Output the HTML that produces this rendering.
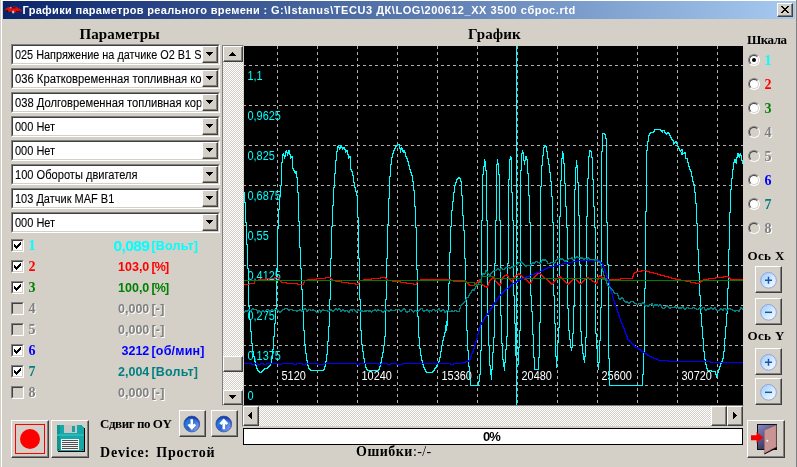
<!DOCTYPE html>
<html lang="ru">
<head>
<meta charset="utf-8">
<title>Графики параметров реального времени</title>
<style>
html,body{margin:0;padding:0;}
body{width:797px;height:467px;overflow:hidden;background:#d4d0c8;position:relative;font-family:"Liberation Sans",sans-serif;font-size:11px;color:#000;}
.abs{position:absolute;}
#frame{left:0;top:0;width:797px;height:467px;box-sizing:border-box;border-left:1px solid #d4d0c8;border-top:1px solid #d4d0c8;}
#title{left:3px;top:1px;width:792px;height:18px;background:linear-gradient(to right,#0a246a 0%,#a6caf0 100%);}
#title .txt{left:19.5px;top:2px;color:#fff;font-weight:bold;font-size:11px;line-height:14px;white-space:nowrap;letter-spacing:0.45px;}
#close{left:777px;top:3px;width:16px;height:14px;box-sizing:border-box;background:#d4d0c8;border:1px solid;border-color:#fff #404040 #404040 #fff;box-shadow:inset -1px -1px 0 #808080;}
.hdr{font-family:"Liberation Serif",serif;font-weight:bold;white-space:nowrap;}
.combo{left:11px;width:209px;height:21px;box-sizing:border-box;background:#fff;border:1px solid;border-color:#808080 #fff #fff #808080;}
.combo:before{content:"";position:absolute;left:0;top:0;right:0;bottom:0;border:1px solid;border-color:#404040 #d4d0c8 #d4d0c8 #404040;}
.combo .t{position:absolute;left:3.4px;top:3px;-webkit-text-stroke:0.1px #000;width:203px;overflow:hidden;white-space:nowrap;font-size:12px;line-height:14px;transform:scaleX(0.917);transform-origin:0 0;}
.btn{box-sizing:border-box;background:#d4d0c8;border:1px solid;border-color:#fff #404040 #404040 #fff;box-shadow:inset -1px -1px 0 #808080,inset 1px 1px 0 #d4d0c8;}
.sbtn{box-sizing:border-box;background:#d4d0c8;border:1px solid;border-color:#d4d0c8 #404040 #404040 #d4d0c8;box-shadow:inset -1px -1px 0 #808080,inset 1px 1px 0 #fff;}
.combo .dd{position:absolute;right:1px;top:1px;width:16px;height:17px;}
.arr{position:absolute;width:0;height:0;border:4px solid transparent;}
.dither{background-color:#eae8e3;background-image:conic-gradient(#fff 25%,#d4d0c8 0 50%,#fff 0 75%,#d4d0c8 0);background-size:2px 2px;}
.cb{left:11px;width:13px;height:13px;box-sizing:border-box;background:#fff;border:1px solid;border-color:#808080 #fff #fff #808080;}
.cb:before{content:"";position:absolute;left:0;top:0;right:0;bottom:0;border:1px solid;border-color:#404040 #d4d0c8 #d4d0c8 #404040;}
.cb.dis{background:#d4d0c8;}
.row{font-family:"Liberation Serif",serif;font-weight:bold;font-size:14px;line-height:16px;white-space:nowrap;}
.val{font-family:"Liberation Sans",sans-serif;font-weight:bold;font-size:12.5px;line-height:15px;white-space:nowrap;}
.dis-t{color:#808080;text-shadow:1px 1px 0 #fff;}
.radio{width:12px;height:12px;border-radius:50%;box-sizing:border-box;background:#fff;border:1px solid;border-color:#808080 #fff #fff #808080;}
.radio:before{content:"";position:absolute;left:0;top:0;right:0;bottom:0;border-radius:50%;border:1px solid;border-color:#404040 #d4d0c8 #d4d0c8 #404040;}
.radio.dis{background:#d4d0c8;}
</style>
</head>
<body>
<div id="root" class="abs" style="left:0;top:0;width:797px;height:467px;will-change:transform">
<div id="frame" class="abs"></div>
<div class="abs" style="left:1px;top:0;width:1px;height:467px;background:#fff"></div><div class="abs" style="left:1px;top:0;width:795px;height:1px;background:#fff"></div><div class="abs" style="left:796px;top:0;width:1px;height:467px;background:#808080"></div>
<div id="title" class="abs">
  <svg class="abs" style="left:1.5px;top:4.6px" width="17" height="8" viewBox="0 0 17 8"><path d="M0.3 3.2 C1.5 1.8 3 1.2 4 0.9 L10 0.6 C11.5 1 12.5 1.8 13.5 2.4 C15.5 2.8 16.3 3.4 16.5 4.4 L16.3 5.8 L12 6.6 L3 5.6 L0.6 4.6 Z" fill="#e01010"/><path d="M4.2 1.3 L9.8 1 L11.8 2.3 L5 2.5 Z" fill="#5a0a10"/><path d="M4.6 1.2 L6.4 1.1 L6.6 2.3 L4.9 2.4Z" fill="#e8a0a0"/><ellipse cx="2.2" cy="5" rx="1" ry="1.3" fill="#301010"/><ellipse cx="8.2" cy="6" rx="1.1" ry="1.5" fill="#e0c0c0"/><path d="M11 5.2 L15.8 4.6 L15.6 5.6 L11.2 6.3Z" fill="#400808"/></svg>
  <div class="txt abs"><span style="letter-spacing:0.32px">Графики параметров реального времени : </span><span style="letter-spacing:0.55px">G:\Istanus\TECU3 ДК\LOG\200612_XX 3500 сброс.rtd</span></div>
</div>
<div id="close" class="abs"><svg class="abs" style="left:3px;top:2px" width="8" height="7" viewBox="0 0 8 7" shape-rendering="crispEdges"><path d="M0 0h2v1h1v1h2v-1h1v-1h2v1h-1v1h-1v1h-1v1h1v1h1v1h1v1h-2v-1h-1v-1h-2v1h-1v1h-2v-1h1v-1h1v-1h1v-1h-1v-1h-1v-1h-1z" fill="#000"/></svg></div>

<div class="abs hdr" id="h1" style="left:79.5px;top:24.5px;font-size:15px;line-height:18px;letter-spacing:0.1px">Параметры</div>
<div class="abs hdr" id="h2" style="left:468px;top:24.5px;font-size:15px;line-height:18px;letter-spacing:0.1px">График</div>
<div class="abs hdr" id="h3" style="left:747px;top:32px;font-size:13px;line-height:16px;letter-spacing:-0.5px">Шкала</div>

<div class="abs combo" style="top:44px"><div class="t" style="transform:scaleX(0.907);width:205.1px">025 Напряжение на датчике O2 B1 S</div><div class="dd btn"><svg class="abs" style="left:3px;top:5px" width="7" height="4" viewBox="0 0 7 4" shape-rendering="crispEdges"><path d="M0 0h7v1h-1v1h-1v1h-1v1h-1v-1h-1v-1h-1v-1h-1z" fill="#000"/></svg></div></div>
<div class="abs combo" style="top:68px"><div class="t" style="transform:scaleX(0.9366);width:198.6px">036 Кратковременная топливная кор</div><div class="dd btn"><svg class="abs" style="left:3px;top:5px" width="7" height="4" viewBox="0 0 7 4" shape-rendering="crispEdges"><path d="M0 0h7v1h-1v1h-1v1h-1v1h-1v-1h-1v-1h-1v-1h-1z" fill="#000"/></svg></div></div>
<div class="abs combo" style="top:92px"><div class="t" style="transform:scaleX(0.9325);width:199.5px">038 Долговременная топливная корр</div><div class="dd btn"><svg class="abs" style="left:3px;top:5px" width="7" height="4" viewBox="0 0 7 4" shape-rendering="crispEdges"><path d="M0 0h7v1h-1v1h-1v1h-1v1h-1v-1h-1v-1h-1v-1h-1z" fill="#000"/></svg></div></div>
<div class="abs combo" style="top:116px"><div class="t" style="transform:scaleX(0.917);width:202.8px">000 Нет</div><div class="dd btn"><svg class="abs" style="left:3px;top:5px" width="7" height="4" viewBox="0 0 7 4" shape-rendering="crispEdges"><path d="M0 0h7v1h-1v1h-1v1h-1v1h-1v-1h-1v-1h-1v-1h-1z" fill="#000"/></svg></div></div>
<div class="abs combo" style="top:140px"><div class="t" style="transform:scaleX(0.917);width:202.8px">000 Нет</div><div class="dd btn"><svg class="abs" style="left:3px;top:5px" width="7" height="4" viewBox="0 0 7 4" shape-rendering="crispEdges"><path d="M0 0h7v1h-1v1h-1v1h-1v1h-1v-1h-1v-1h-1v-1h-1z" fill="#000"/></svg></div></div>
<div class="abs combo" style="top:164px"><div class="t" style="transform:scaleX(0.924);width:201.3px">100 Обороты двигателя</div><div class="dd btn"><svg class="abs" style="left:3px;top:5px" width="7" height="4" viewBox="0 0 7 4" shape-rendering="crispEdges"><path d="M0 0h7v1h-1v1h-1v1h-1v1h-1v-1h-1v-1h-1v-1h-1z" fill="#000"/></svg></div></div>
<div class="abs combo" style="top:188px"><div class="t" style="transform:scaleX(0.917);width:202.8px">103 Датчик MAF B1</div><div class="dd btn"><svg class="abs" style="left:3px;top:5px" width="7" height="4" viewBox="0 0 7 4" shape-rendering="crispEdges"><path d="M0 0h7v1h-1v1h-1v1h-1v1h-1v-1h-1v-1h-1v-1h-1z" fill="#000"/></svg></div></div>
<div class="abs combo" style="top:212px"><div class="t" style="transform:scaleX(0.917);width:202.8px">000 Нет</div><div class="dd btn"><svg class="abs" style="left:3px;top:5px" width="7" height="4" viewBox="0 0 7 4" shape-rendering="crispEdges"><path d="M0 0h7v1h-1v1h-1v1h-1v1h-1v-1h-1v-1h-1v-1h-1z" fill="#000"/></svg></div></div>
<div class="abs cb" style="top:239px"><svg class="abs" style="left:2px;top:2px" width="7" height="7" viewBox="0 0 7 7" shape-rendering="crispEdges"><path d="M0 2h1v1h1v1h1v-1h1v-1h1v-1h1v-1h1v3h-1v1h-1v1h-1v1h-1v1h-1v-1h-1v-1h-1z" fill="#000"/></svg></div>
<div class="abs row" style="left:28.5px;top:238px;color:#00ffff;">1</div>
<div class="abs val" style="right:647.7px;top:238px;font-size:15.5px;letter-spacing:-0.6px;color:#00ffff;">0,089</div>
<div class="abs val" style="left:151.5px;top:239px;letter-spacing:0.2px;color:#00ffff;">[Вольт]</div>
<div class="abs cb" style="top:260px"><svg class="abs" style="left:2px;top:2px" width="7" height="7" viewBox="0 0 7 7" shape-rendering="crispEdges"><path d="M0 2h1v1h1v1h1v-1h1v-1h1v-1h1v-1h1v3h-1v1h-1v1h-1v1h-1v1h-1v-1h-1v-1h-1z" fill="#000"/></svg></div>
<div class="abs row" style="left:28.5px;top:259px;color:#ff0000;">2</div>
<div class="abs val" style="right:647.7px;top:260px;letter-spacing:0px;color:#ff0000;">103,0</div>
<div class="abs val" style="left:151.5px;top:260px;letter-spacing:-0.9px;color:#ff0000;">[%]</div>
<div class="abs cb" style="top:281px"><svg class="abs" style="left:2px;top:2px" width="7" height="7" viewBox="0 0 7 7" shape-rendering="crispEdges"><path d="M0 2h1v1h1v1h1v-1h1v-1h1v-1h1v-1h1v3h-1v1h-1v1h-1v1h-1v1h-1v-1h-1v-1h-1z" fill="#000"/></svg></div>
<div class="abs row" style="left:28.5px;top:280px;color:#008000;">3</div>
<div class="abs val" style="right:647.7px;top:281px;letter-spacing:0px;color:#008000;">100,0</div>
<div class="abs val" style="left:151.5px;top:281px;letter-spacing:-0.9px;color:#008000;">[%]</div>
<div class="abs cb dis" style="top:302px"></div>
<div class="abs row dis-t" style="left:28.5px;top:301px;">4</div>
<div class="abs val dis-t" style="right:647.7px;top:302px;letter-spacing:0px;">0,000</div>
<div class="abs val dis-t" style="left:151.5px;top:302px;letter-spacing:0.2px;">[-]</div>
<div class="abs cb dis" style="top:323px"></div>
<div class="abs row dis-t" style="left:28.5px;top:322px;">5</div>
<div class="abs val dis-t" style="right:647.7px;top:323px;letter-spacing:0px;">0,000</div>
<div class="abs val dis-t" style="left:151.5px;top:323px;letter-spacing:0.2px;">[-]</div>
<div class="abs cb" style="top:344px"><svg class="abs" style="left:2px;top:2px" width="7" height="7" viewBox="0 0 7 7" shape-rendering="crispEdges"><path d="M0 2h1v1h1v1h1v-1h1v-1h1v-1h1v-1h1v3h-1v1h-1v1h-1v1h-1v1h-1v-1h-1v-1h-1z" fill="#000"/></svg></div>
<div class="abs row" style="left:28.5px;top:343px;color:#0000ff;">6</div>
<div class="abs val" style="right:647.7px;top:344px;letter-spacing:0px;color:#0000ff;">3212</div>
<div class="abs val" style="left:151.5px;top:344px;letter-spacing:0.2px;color:#0000ff;">[об/мин]</div>
<div class="abs cb" style="top:365px"><svg class="abs" style="left:2px;top:2px" width="7" height="7" viewBox="0 0 7 7" shape-rendering="crispEdges"><path d="M0 2h1v1h1v1h1v-1h1v-1h1v-1h1v-1h1v3h-1v1h-1v1h-1v1h-1v1h-1v-1h-1v-1h-1z" fill="#000"/></svg></div>
<div class="abs row" style="left:28.5px;top:364px;color:#008080;">7</div>
<div class="abs val" style="right:647.7px;top:365px;letter-spacing:0px;color:#008080;">2,004</div>
<div class="abs val" style="left:151.5px;top:365px;letter-spacing:0.2px;color:#008080;">[Вольт]</div>
<div class="abs cb dis" style="top:386px"></div>
<div class="abs row dis-t" style="left:28.5px;top:385px;">8</div>
<div class="abs val dis-t" style="right:647.7px;top:386px;letter-spacing:0px;">0,000</div>
<div class="abs val dis-t" style="left:151.5px;top:386px;letter-spacing:0.2px;">[-]</div>
<div class="abs" style="left:222px;top:45px;width:22px;height:361px;box-sizing:border-box;border:1px solid;border-color:#808080 #d4d0c8 #d4d0c8 #808080"></div>
<div class="abs dither" style="left:223px;top:46px;width:20px;height:359px"></div>
<div class="abs btn" style="left:223px;top:46px;width:20px;height:16px"><svg class="abs" style="left:5px;top:5px" width="7" height="4" viewBox="0 0 7 4" shape-rendering="crispEdges"><path d="M3 0h1v1h1v1h1v1h1v1h-7v-1h1v-1h1v-1h1z" fill="#000"/></svg></div>
<div class="abs btn" style="left:223px;top:390px;width:20px;height:15px"><svg class="abs" style="left:5px;top:4px" width="7" height="4" viewBox="0 0 7 4" shape-rendering="crispEdges"><path d="M0 0h7v1h-1v1h-1v1h-1v1h-1v-1h-1v-1h-1v-1h-1z" fill="#000"/></svg></div>
<div class="abs btn" style="left:223px;top:356px;width:20px;height:16px"></div>
<div class="abs" style="left:242px;top:405px;width:502px;height:22px;box-sizing:border-box;border:1px solid;border-color:#808080 #d4d0c8 #d4d0c8 #808080"></div>
<div class="abs dither" style="left:243px;top:406px;width:500px;height:20px"></div>
<div class="abs btn" style="left:243px;top:406px;width:16px;height:20px"><svg class="abs" style="left:4px;top:5px" width="4" height="7" viewBox="0 0 4 7" shape-rendering="crispEdges"><path d="M3 0h1v7h-1v-1h-1v-1h-1v-1h-1v-1h1v-1h1v-1h1z" fill="#000"/></svg></div>
<div class="abs btn" style="left:727px;top:406px;width:16px;height:20px"><svg class="abs" style="left:5px;top:5px" width="4" height="7" viewBox="0 0 4 7" shape-rendering="crispEdges"><path d="M0 0h1v1h1v1h1v1h1v1h-1v1h-1v1h-1v1h-1z" fill="#000"/></svg></div>
<div class="abs btn" style="left:711px;top:406px;width:16px;height:20px"></div>
<svg class="abs" style="left:244px;top:46px" width="499" height="359" viewBox="244 46 499 359" shape-rendering="crispEdges">
<rect x="244" y="46" width="499" height="359" fill="#000"/>
<path d="M243 65.5H743M243 105.5H743M243 145.5H743M243 185.5H743M243 225.5H743M243 265.5H743M243 305.5H743M243 345.5H743M243 385.5H743" stroke="#b0b0b0" stroke-width="1" stroke-dasharray="3 3" fill="none"/>
<path d="M277.5 46V405M317.5 46V405M357.5 46V405M397.5 46V405M437.5 46V405M477.5 46V405M517.5 46V405M557.5 46V405M597.5 46V405M637.5 46V405M677.5 46V405M717.5 46V405" stroke="#b0b0b0" stroke-width="1" stroke-dasharray="3 3" fill="none"/>
<g font-family="Liberation Sans, sans-serif" font-size="13" shape-rendering="auto">
<text transform="translate(247.5 80) scale(0.84 1)" fill="#00ffff">1,1</text>
<text transform="translate(247.5 120) scale(0.84 1)" fill="#00ffff">0,9625</text>
<text transform="translate(247.5 160) scale(0.84 1)" fill="#00ffff">0,825</text>
<text transform="translate(247.5 200) scale(0.84 1)" fill="#00ffff">0,6875</text>
<text transform="translate(247.5 240) scale(0.84 1)" fill="#00ffff">0,55</text>
<text transform="translate(247.5 280) scale(0.84 1)" fill="#00ffff">0,4125</text>
<text transform="translate(247.5 320) scale(0.84 1)" fill="#00ffff">0,275</text>
<text transform="translate(247.5 360) scale(0.84 1)" fill="#00ffff">0,1375</text>
<text transform="translate(247.5 400) scale(0.84 1)" fill="#00ffff">0</text>
<text transform="translate(281.5 380) scale(0.84 1)" x="0.00" fill="#ffffff">5120</text>
<text transform="translate(281.5 380) scale(0.84 1)" x="95.24" fill="#ffffff">10240</text>
<text transform="translate(281.5 380) scale(0.84 1)" x="190.48" fill="#ffffff">15360</text>
<text transform="translate(281.5 380) scale(0.84 1)" x="285.71" fill="#ffffff">20480</text>
<text transform="translate(281.5 380) scale(0.84 1)" x="380.95" fill="#ffffff">25600</text>
<text transform="translate(281.5 380) scale(0.84 1)" x="476.19" fill="#ffffff">30720</text>
</g>
<path d="M244.5 192.5V202.5H245.5V222.5H246.5V244.5H247.5V268.5H248.5V306.5H249.5V319.5H250.5V331.5H251.5V343.5H252.5V351.5H253.5V356.5H254.5V361.5H255.5V365.5H256.5V368.5H257.5V370.5H258.5V371.5H259.5V372.5H261.5V371.5H262.5V370.5H263.5V369.5H264.5V368.5H267.5V367.5H268.5V366.5H269.5V365.5H270.5V363.5H271.5V358.5H272.5V349.5H273.5V336.5H274.5V323.5H275.5V308.5H276.5V268.5H277.5V228.5H278.5V209.5H279.5V196.5H280.5V185.5H281.5V162.5H282.5V154.5H283.5V152.5V155.5H284.5V158.5V156.5H285.5V151.5H286.5V149.5V152.5H287.5V155.5V153.5H288.5V150.5H289.5V149.5V154.5H290.5V158.5V157.5H291.5V156.5H292.5V155.5V168.5H293.5V170.5H294.5V172.5H295.5V173.5V171.5H296.5V170.5V177.5H297.5V192.5H298.5V221.5H299.5V247.5H300.5V268.5H301.5V289.5H302.5V310.5H303.5V330.5H304.5V344.5H305.5V353.5H306.5V360.5H307.5V365.5H308.5V368.5H309.5V369.5H310.5V370.5H323.5V369.5H324.5V366.5H325.5V361.5H326.5V354.5H327.5V341.5H328.5V326.5H329.5V299.5H330.5V258.5H331.5V226.5H332.5V205.5H333.5V187.5H334.5V173.5H335.5V160.5H336.5V151.5H337.5V146.5H338.5V144.5V147.5H339.5V149.5V148.5H340.5V145.5H341.5V144.5V147.5H342.5V149.5V148.5H343.5V147.5H344.5V146.5V149.5H345.5V152.5V151.5H346.5V150.5H347.5V149.5V154.5H348.5V158.5V157.5H349.5V156.5H350.5V155.5V169.5H351.5V171.5H352.5V175.5H353.5V182.5H354.5V187.5H355.5V191.5H356.5V195.5H357.5V217.5H358.5V258.5H359.5V299.5H360.5V330.5H361.5V344.5H362.5V351.5H363.5V358.5H364.5V363.5H365.5V367.5H366.5V369.5H367.5V370.5H378.5V369.5H379.5V366.5H380.5V362.5H381.5V357.5H382.5V352.5H383.5V345.5H384.5V336.5H385.5V299.5H386.5V258.5H387.5V224.5H388.5V198.5H389.5V176.5H390.5V164.5H391.5V157.5H392.5V153.5H393.5V150.5H394.5V148.5H395.5V146.5H396.5V145.5H397.5V144.5H399.5V148.5H400.5V152.5V149.5H401.5V146.5V148.5H402.5V151.5H403.5V152.5V150.5H404.5V149.5V152.5H405.5V156.5H406.5V158.5H407.5V161.5H408.5V165.5H409.5V169.5H410.5V172.5H411.5V175.5H412.5V181.5H413.5V190.5H414.5V206.5H415.5V227.5H416.5V269.5H417.5V316.5H418.5V337.5H419.5V348.5H420.5V355.5H421.5V360.5H422.5V364.5H423.5V367.5H424.5V369.5H425.5V371.5H426.5V372.5H432.5V371.5H433.5V370.5H434.5V368.5H435.5V367.5H436.5V365.5H437.5V363.5H438.5V361.5H439.5V357.5H440.5V351.5H441.5V345.5H442.5V340.5H443.5V336.5H444.5V332.5H445.5V325.5H446.5V320.5V330.5V325.5H447.5V310.5H448.5V283.5H449.5V252.5H450.5V226.5H451.5V210.5H452.5V201.5H453.5V192.5H454.5V185.5H455.5V182.5H456.5V179.5H457.5V178.5H458.5V177.5H459.5V176.5V178.5H460.5V181.5H461.5V195.5H462.5V215.5H463.5V230.5H464.5V258.5H465.5V299.5H466.5V330.5H467.5V350.5H468.5V366.5H469.5V379.5H470.5V385.5H478.5V381.5H479.5V374.5H480.5V350.5H481.5V220.5H482.5V174.5H483.5V166.5H484.5V158.5V161.5H485.5V170.5H486.5V220.5H487.5V315.5H488.5V345.5H489.5V365.5H490.5V374.5H491.5V379.5V369.5H492.5V352.5H493.5V337.5H494.5V263.5H495.5V220.5H496.5V164.5H497.5V158.5V163.5H498.5V174.5H499.5V220.5H500.5V315.5H501.5V343.5H502.5V359.5H503.5V366.5H504.5V370.5V362.5H505.5V349.5H506.5V336.5H507.5V263.5H508.5V179.5H509.5V159.5H510.5V155.5V157.5H511.5V192.5H512.5V220.5H513.5V295.5H514.5V323.5H515.5V355.5H516.5V365.5H517.5V364.5H518.5V347.5H519.5V330.5H520.5V170.5H521.5V153.5H522.5V149.5V152.5H523.5V160.5H524.5V164.5V160.5H525.5V156.5H526.5V155.5V159.5H527.5V173.5H528.5V195.5H529.5V222.5H530.5V295.5H531.5V311.5H532.5V334.5H533.5V357.5H534.5V369.5H538.5V357.5H539.5V322.5H540.5V186.5H541.5V165.5H542.5V155.5H543.5V147.5H544.5V145.5H545.5V146.5H546.5V151.5H547.5V158.5H548.5V164.5H549.5V172.5H550.5V181.5H551.5V196.5H552.5V222.5H553.5V295.5H554.5V323.5H555.5V356.5H556.5V367.5V358.5H557.5V342.5H558.5V327.5H559.5V216.5H560.5V180.5H561.5V158.5H562.5V150.5V153.5H563.5V163.5H564.5V183.5H565.5V206.5H566.5V227.5H567.5V308.5H568.5V330.5H569.5V339.5H570.5V347.5H571.5V350.5V347.5H572.5V333.5H573.5V306.5H574.5V189.5H575.5V167.5H576.5V159.5V165.5H577.5V182.5H578.5V215.5H579.5V264.5H580.5V331.5H581.5V344.5H582.5V353.5H583.5V359.5H584.5V362.5V356.5H585.5V337.5H586.5V216.5H587.5V178.5H588.5V156.5H589.5V150.5H590.5V149.5V151.5H591.5V157.5H592.5V179.5H593.5V206.5H594.5V227.5H595.5V333.5H596.5V348.5H597.5V362.5H598.5V369.5V362.5H599.5V340.5H600.5V307.5H601.5V151.5H602.5V133.5H603.5V132.5V133.5H604.5V134.5H605.5V138.5H606.5V222.5H607.5V264.5H608.5V358.5H609.5V385.5H642.5V374.5H643.5V351.5H644.5V288.5H645.5V211.5H646.5V150.5H647.5V141.5H648.5V135.5H649.5V133.5H650.5V132.5H653.5V131.5H654.5V129.5H660.5V130.5H661.5V131.5H662.5V132.5V130.5H663.5V129.5V130.5H664.5V132.5H665.5V133.5H666.5V134.5V133.5H667.5V132.5H668.5V133.5H669.5V135.5H670.5V137.5H671.5V139.5H672.5V140.5H673.5V144.5V143.5H674.5V142.5H675.5V141.5H676.5V143.5H677.5V146.5H678.5V148.5H679.5V150.5H680.5V151.5V150.5H681.5V149.5H682.5V152.5H681.5V154.5H682.5V153.5H684.5V152.5H685.5V158.5H687.5V162.5H688.5V166.5H689.5V169.5H690.5V171.5H691.5V176.5H692.5V181.5H693.5V184.5H694.5V192.5H695.5V203.5H696.5V223.5H697.5V249.5H698.5V272.5H699.5V295.5H700.5V313.5H701.5V326.5H702.5V338.5H703.5V351.5H704.5V359.5H705.5V364.5H706.5V368.5H707.5V370.5H711.5V371.5H715.5V374.5H716.5V377.5V375.5H717.5V372.5H718.5V369.5H719.5V366.5H720.5V363.5H721.5V361.5H722.5V358.5H723.5V351.5H724.5V338.5H725.5V326.5H726.5V313.5H727.5V288.5H728.5V249.5H729.5V212.5H730.5V189.5H731.5V178.5H732.5V169.5H733.5V162.5H734.5V158.5V159.5H735.5V162.5H736.5V163.5V157.5H737.5V152.5V153.5H738.5V156.5H739.5V157.5V154.5H740.5V152.5V155.5H741.5V160.5H742.5V163.5" fill="none" stroke="#00ffff" stroke-width="1" stroke-linecap="square" stroke-linejoin="miter"/>
<path d="M516.5 46V405" stroke="#00ffff" stroke-width="1" fill="none"/>
<path d="M244.5 284.5H249.5V283.5H254.5V280.5H258.5V279.5H266.5V278.5H274.5V277.5H278.5V278.5H279.5V280.5H280.5V281.5H281.5V282.5H286.5V283.5H297.5V284.5H303.5V282.5H304.5V280.5H307.5V279.5H316.5V278.5H325.5V277.5H330.5V278.5H331.5V279.5H332.5V280.5H335.5V281.5H341.5V282.5H348.5V283.5H355.5V284.5H358.5V282.5H359.5V280.5H363.5V279.5H371.5V278.5H380.5V277.5H385.5V278.5H386.5V279.5H387.5V280.5H392.5V281.5H400.5V282.5H406.5V283.5H413.5V284.5H416.5V282.5H417.5V280.5H420.5V279.5H450.5V280.5H453.5V281.5H466.5V282.5H467.5V283.5H468.5V284.5H469.5V285.5H474.5V284.5H475.5V283.5H476.5V282.5H477.5V281.5H478.5V280.5H479.5V279.5H480.5V282.5H481.5V284.5H482.5V285.5H484.5V286.5H486.5V287.5H487.5V285.5H488.5V282.5H489.5V280.5H490.5V279.5H491.5V278.5H492.5V277.5H493.5V278.5H494.5V279.5H495.5V281.5H496.5V282.5H497.5V283.5H498.5V284.5H499.5V285.5H500.5V283.5H501.5V279.5H502.5V277.5H503.5V276.5H504.5V275.5H506.5V274.5H507.5V276.5H508.5V278.5H509.5V279.5H510.5V280.5H511.5V281.5H512.5V282.5V279.5H513.5V277.5H514.5V276.5H515.5V275.5H517.5V274.5H518.5V273.5H519.5V274.5H520.5V275.5H521.5V276.5H522.5V277.5H523.5V278.5H524.5V279.5H526.5V280.5H527.5V281.5H528.5V282.5H529.5V283.5H530.5V282.5H531.5V280.5H532.5V278.5H533.5V277.5H534.5V276.5H535.5V275.5H536.5V274.5H537.5V273.5H538.5V272.5H539.5V273.5H540.5V274.5H541.5V275.5H542.5V276.5H543.5V277.5H544.5V278.5H546.5V279.5H547.5V280.5H548.5V281.5H549.5V282.5H550.5V283.5H551.5V284.5H552.5V283.5H553.5V281.5H554.5V280.5H555.5V279.5H556.5V278.5H558.5V277.5H559.5V276.5H560.5V277.5H561.5V278.5H562.5V279.5H563.5V280.5H564.5V281.5H565.5V282.5H566.5V283.5H567.5V284.5H568.5V283.5H569.5V282.5H570.5V281.5H571.5V280.5H572.5V279.5H573.5V278.5H574.5V277.5V278.5H575.5V279.5H576.5V280.5H577.5V281.5H578.5V282.5H579.5V283.5H580.5V284.5V283.5H581.5V282.5H582.5V281.5H583.5V280.5H584.5V279.5H585.5V278.5H586.5V277.5H588.5V278.5H589.5V279.5H591.5V280.5H592.5V281.5H594.5V282.5H595.5V283.5H596.5V282.5H597.5V279.5H598.5V276.5H599.5V275.5H600.5V276.5H601.5V277.5H603.5V278.5H606.5V279.5H620.5V278.5H632.5V276.5H633.5V273.5H634.5V272.5H636.5V271.5H641.5V270.5H646.5V271.5H649.5V272.5H653.5V273.5H657.5V274.5H660.5V275.5H664.5V276.5H668.5V277.5H671.5V278.5H675.5V279.5H680.5V280.5H685.5V281.5H690.5V282.5H695.5V283.5H699.5V282.5H700.5V281.5H702.5V280.5H703.5V279.5H708.5V278.5H715.5V277.5H723.5V276.5H728.5V277.5H729.5V278.5H730.5V279.5H743.5" fill="none" stroke="#ff0000" stroke-width="1" stroke-linecap="square" stroke-linejoin="miter"/>
<path d="M244.5 280.5H465.5V282.5H474.5V284.5H481.5V276.5H494.5V278.5H602.5V279.5H606.5V280.5H743.5" fill="none" stroke="#008000" stroke-width="1" stroke-linecap="square" stroke-linejoin="miter"/>
<path d="M244.5 363.5H251.5V364.5H254.5V363.5H257.5V364.5H260.5V363.5H263.5V364.5H266.5V363.5H278.5V364.5H281.5V363.5H293.5V364.5H296.5V363.5H302.5V364.5H305.5V363.5H317.5V364.5H323.5V363.5H356.5V364.5H359.5V363.5H378.5V364.5H381.5V363.5H387.5V364.5H390.5V363.5H396.5V364.5H402.5V363.5H450.5V364.5H453.5V363.5H462.5V362.5H465.5V361.5H468.5V360.5H469.5V359.5H470.5V356.5H471.5V353.5H472.5V351.5H473.5V348.5H474.5V345.5H475.5V341.5H476.5V338.5H477.5V334.5H478.5V330.5H479.5V327.5H480.5V324.5H481.5V322.5H482.5V321.5H483.5V319.5H484.5V317.5H485.5V316.5H486.5V314.5H487.5V313.5H488.5V311.5H489.5V310.5H490.5V308.5H491.5V307.5H492.5V305.5H493.5V304.5H494.5V302.5H495.5V301.5H496.5V299.5H497.5V298.5H498.5V296.5H499.5V295.5H500.5V294.5H501.5V293.5H502.5V292.5H503.5V291.5H504.5V290.5H505.5V289.5H506.5V288.5H508.5V287.5H509.5V286.5H510.5V285.5H511.5V284.5H512.5V283.5H514.5V282.5H516.5V281.5H517.5V280.5H519.5V279.5H521.5V278.5H524.5V277.5H526.5V276.5H529.5V275.5H531.5V274.5H534.5V273.5H536.5V272.5H539.5V271.5H541.5V270.5H543.5V269.5H545.5V268.5H547.5V267.5H550.5V266.5H554.5V265.5H558.5V264.5H562.5V263.5H567.5V262.5H572.5V261.5H577.5V260.5H599.5V261.5H600.5V262.5H601.5V263.5H602.5V264.5H603.5V267.5H604.5V270.5H605.5V273.5H606.5V276.5H607.5V279.5H608.5V282.5H609.5V286.5H610.5V290.5H611.5V293.5H612.5V297.5H613.5V300.5H614.5V303.5H615.5V306.5H616.5V309.5H617.5V312.5H618.5V315.5H619.5V318.5H620.5V321.5H621.5V323.5H622.5V326.5H623.5V328.5H624.5V331.5H625.5V334.5H626.5V336.5H627.5V339.5H628.5V340.5H629.5V341.5H630.5V342.5H631.5V343.5H632.5V344.5H633.5V345.5H634.5V346.5H635.5V347.5H637.5V348.5H638.5V349.5H640.5V350.5H641.5V351.5H643.5V352.5H644.5V353.5H646.5V354.5H647.5V355.5H649.5V356.5H651.5V357.5H653.5V358.5H656.5V359.5H658.5V360.5H668.5V361.5H710.5V362.5H743.5" fill="none" stroke="#0000ff" stroke-width="1" stroke-linecap="square" stroke-linejoin="miter"/>
<path d="M244.5 312.5V311.5H245.5V310.5H246.5V311.5H247.5V310.5H248.5V309.5H249.5V308.5V310.5H250.5V311.5V310.5H251.5V309.5H252.5V308.5H253.5V309.5H256.5V310.5H257.5V311.5H258.5V310.5H259.5V311.5H262.5V310.5H263.5V309.5V311.5H264.5V312.5V311.5H265.5V310.5H266.5V309.5H267.5V308.5V309.5H268.5V310.5H269.5V311.5H270.5V310.5H271.5V309.5H272.5V310.5H273.5V311.5V310.5H274.5V309.5H277.5V310.5H278.5V311.5H279.5V312.5H280.5V311.5H281.5V310.5H282.5V309.5H284.5V308.5H287.5V309.5H288.5V310.5H289.5V309.5H292.5V310.5H296.5V311.5H297.5V310.5H299.5V309.5H300.5V310.5H301.5V311.5H302.5V310.5H303.5V309.5H304.5V308.5H305.5V309.5H306.5V311.5H307.5V310.5H308.5V309.5H310.5V310.5H312.5V309.5H313.5V310.5H315.5V311.5H316.5V312.5H318.5V310.5H319.5V308.5V310.5H320.5V312.5V311.5H321.5V310.5H322.5V309.5H323.5V310.5H327.5V311.5H329.5V310.5H330.5V309.5H331.5V310.5H332.5V311.5H333.5V310.5H334.5V309.5H335.5V308.5H336.5V309.5H337.5V310.5V309.5H338.5V308.5H339.5V309.5H340.5V311.5H341.5V310.5H342.5V309.5H343.5V308.5V310.5H344.5V311.5H345.5V310.5H347.5V311.5H348.5V312.5H349.5V310.5H350.5V308.5V309.5H351.5V310.5H352.5V311.5V309.5H353.5V308.5V309.5H354.5V310.5H355.5V311.5H356.5V312.5V311.5H357.5V309.5H358.5V310.5H360.5V311.5H361.5V310.5H362.5V311.5H364.5V310.5H365.5V311.5H366.5V310.5H368.5V311.5H369.5V310.5H370.5V309.5V311.5H371.5V312.5V311.5H372.5V310.5H374.5V309.5H375.5V308.5V310.5H376.5V311.5V310.5H377.5V309.5H378.5V310.5H381.5V311.5H382.5V312.5H383.5V311.5H384.5V310.5H385.5V309.5H386.5V310.5H388.5V311.5H389.5V310.5H390.5V309.5H391.5V310.5H395.5V309.5H399.5V310.5H400.5V311.5H401.5V310.5H402.5V309.5H403.5V308.5H404.5V309.5H405.5V311.5H406.5V312.5H407.5V311.5H409.5V309.5H410.5V308.5V309.5H411.5V310.5H412.5V311.5H413.5V312.5V311.5H414.5V310.5H416.5V311.5H418.5V310.5H419.5V309.5H420.5V308.5H422.5V310.5H423.5V311.5H424.5V310.5H426.5V309.5H427.5V310.5H428.5V311.5H429.5V312.5V310.5H430.5V309.5V310.5H431.5V311.5V310.5H432.5V309.5H434.5V310.5H435.5V311.5V310.5H437.5V309.5H438.5V308.5H439.5V310.5H440.5V311.5H441.5V310.5H442.5V309.5H443.5V310.5H444.5V312.5H445.5V311.5H446.5V310.5H447.5V309.5V310.5H448.5V311.5H451.5V310.5H452.5V311.5H454.5V310.5H456.5V311.5H459.5V308.5H460.5V305.5H461.5V304.5H462.5V303.5H463.5V302.5H464.5V301.5H465.5V299.5H466.5V297.5H468.5V295.5H469.5V293.5H470.5V292.5H471.5V290.5H472.5V289.5H473.5V290.5H474.5V288.5H475.5V286.5H476.5V285.5H477.5V284.5H478.5V282.5H479.5V281.5H480.5V279.5H481.5V275.5H482.5V273.5H483.5V274.5H484.5V273.5H485.5V270.5H486.5V269.5V271.5H487.5V273.5H488.5V274.5H489.5V275.5H490.5V273.5H491.5V272.5H492.5V271.5H493.5V270.5H496.5V269.5H497.5V268.5H498.5V269.5H499.5V270.5H500.5V271.5V268.5H501.5V266.5V268.5H502.5V269.5H504.5V268.5H505.5V267.5H509.5V268.5H510.5V267.5H511.5V266.5H512.5V267.5H513.5V266.5H514.5V265.5H516.5V264.5H517.5V263.5H518.5V262.5H520.5V261.5H521.5V262.5H522.5V263.5H523.5V264.5H524.5V265.5H525.5V266.5H526.5V265.5H530.5V264.5H531.5V263.5H532.5V262.5H533.5V263.5H534.5V262.5H535.5V261.5H537.5V262.5H539.5V263.5H540.5V262.5H541.5V260.5H542.5V259.5H543.5V260.5H544.5V259.5H545.5V260.5H546.5V261.5H547.5V263.5H550.5V262.5H553.5V263.5H554.5V262.5H555.5V260.5H556.5V259.5H557.5V258.5H560.5V259.5H561.5V258.5H562.5V259.5H563.5V260.5H564.5V261.5V260.5H565.5V261.5H566.5V260.5H567.5V259.5H568.5V258.5H571.5V257.5H572.5V259.5H573.5V260.5V259.5H574.5V258.5H575.5V257.5H576.5V256.5H577.5V257.5H580.5V258.5H581.5V257.5H582.5V258.5H583.5V259.5H584.5V258.5H585.5V257.5V258.5H586.5V259.5H587.5V257.5H588.5V256.5V258.5H589.5V259.5H594.5V260.5H595.5V261.5V259.5H596.5V258.5V259.5H597.5V261.5H598.5V262.5V261.5H599.5V260.5V262.5H600.5V265.5H601.5V268.5H602.5V271.5H603.5V275.5H604.5V278.5H605.5V280.5H606.5V283.5H607.5V285.5H608.5V286.5H609.5V287.5H610.5V288.5H611.5V289.5H612.5V290.5H613.5V292.5H614.5V293.5H617.5V295.5H618.5V298.5H619.5V299.5H620.5V298.5H621.5V297.5H622.5V298.5H623.5V300.5H624.5V301.5H625.5V302.5H626.5V301.5H627.5V302.5H628.5V303.5H629.5V302.5H630.5V301.5H633.5V302.5H634.5V303.5H636.5V304.5H638.5V303.5H640.5V304.5H641.5V303.5H642.5V302.5H643.5V303.5H644.5V305.5H645.5V306.5V305.5H646.5V304.5V305.5H647.5V306.5H648.5V305.5H649.5V304.5H651.5V303.5H652.5V305.5H653.5V307.5V305.5H654.5V303.5V304.5H655.5V305.5H656.5V304.5H657.5V303.5V305.5H658.5V306.5V305.5H659.5V304.5H660.5V305.5H661.5V307.5H662.5V308.5H664.5V307.5H665.5V306.5H666.5V305.5H667.5V306.5H668.5V307.5H669.5V308.5H670.5V307.5H674.5V306.5H675.5V307.5H676.5V308.5V307.5H678.5V308.5H679.5V307.5H680.5V308.5H681.5V307.5H682.5V306.5H683.5V308.5H684.5V309.5H685.5V308.5H686.5V307.5H688.5V308.5H692.5V307.5H693.5V306.5V307.5H694.5V308.5H696.5V309.5H698.5V308.5H699.5V307.5H700.5V308.5H701.5V309.5V308.5H702.5V307.5H703.5V306.5V307.5H704.5V309.5H705.5V310.5H706.5V309.5H707.5V308.5H708.5V309.5H709.5V308.5H710.5V307.5H711.5V308.5H712.5V309.5H713.5V308.5H714.5V307.5H715.5V309.5H716.5V310.5H719.5V309.5H720.5V308.5H721.5V309.5H722.5V310.5H723.5V308.5H724.5V307.5V308.5H725.5V309.5H726.5V310.5H727.5V309.5H728.5V308.5H730.5V309.5H732.5V310.5H734.5V311.5H735.5V310.5H738.5V311.5H739.5V309.5H740.5V307.5H741.5V308.5H742.5V309.5H743.5" fill="none" stroke="#008080" stroke-width="1" stroke-linecap="square" stroke-linejoin="miter"/>
</svg>
<div class="abs radio" style="left:748px;top:54px"><div class="abs" style="left:3px;top:3px;width:4px;height:4px;border-radius:50%;background:#000"></div></div>
<div class="abs row" style="left:764.5px;top:53px;color:#00ffff;">1</div>
<div class="abs radio" style="left:748px;top:78px"></div>
<div class="abs row" style="left:764.5px;top:77px;color:#ff0000;">2</div>
<div class="abs radio" style="left:748px;top:102px"></div>
<div class="abs row" style="left:764.5px;top:101px;color:#008000;">3</div>
<div class="abs radio dis" style="left:748px;top:126px"></div>
<div class="abs row dis-t" style="left:764.5px;top:125px;">4</div>
<div class="abs radio dis" style="left:748px;top:150px"></div>
<div class="abs row dis-t" style="left:764.5px;top:149px;">5</div>
<div class="abs radio" style="left:748px;top:174px"></div>
<div class="abs row" style="left:764.5px;top:173px;color:#0000ff;">6</div>
<div class="abs radio" style="left:748px;top:198px"></div>
<div class="abs row" style="left:764.5px;top:197px;color:#008080;">7</div>
<div class="abs radio dis" style="left:748px;top:222px"></div>
<div class="abs row dis-t" style="left:764.5px;top:221px;">8</div>
<div class="abs hdr" style="left:747.5px;top:248px;font-size:13px;line-height:16px;letter-spacing:0.35px">Ось X</div>
<div class="abs hdr" style="left:747.5px;top:328px;font-size:13px;line-height:16px;letter-spacing:0.35px">Ось Y</div>
<div class="abs btn" style="left:755px;top:266px;width:27px;height:27px"><svg class="abs" style="left:4px;top:4px" width="17" height="18" viewBox="0 0 16 17"><defs><linearGradient id="zg266" x1="0.1" y1="0.1" x2="0.9" y2="0.9"><stop offset="0" stop-color="#a4d0f6"/><stop offset="0.55" stop-color="#cfeafc"/><stop offset="1" stop-color="#f4fbff"/></linearGradient></defs><circle cx="8" cy="8.8" r="7.4" fill="url(#zg266)" stroke="#8c9ee6" stroke-width="0.9"/><path d="M4.7 8.8h6.6M8 5.5v6.6" stroke="#2050b4" stroke-width="1.4" fill="none"/></svg></div>
<div class="abs btn" style="left:755px;top:298px;width:27px;height:27px"><svg class="abs" style="left:4px;top:4px" width="17" height="18" viewBox="0 0 16 17"><defs><linearGradient id="zg298" x1="0.1" y1="0.1" x2="0.9" y2="0.9"><stop offset="0" stop-color="#a4d0f6"/><stop offset="0.55" stop-color="#cfeafc"/><stop offset="1" stop-color="#f4fbff"/></linearGradient></defs><circle cx="8" cy="8.8" r="7.4" fill="url(#zg298)" stroke="#8c9ee6" stroke-width="0.9"/><path d="M4.7 8.8h6.6" stroke="#2050b4" stroke-width="1.4" fill="none"/></svg></div>
<div class="abs btn" style="left:755px;top:348px;width:27px;height:27px"><svg class="abs" style="left:4px;top:4px" width="17" height="18" viewBox="0 0 16 17"><defs><linearGradient id="zg348" x1="0.1" y1="0.1" x2="0.9" y2="0.9"><stop offset="0" stop-color="#a4d0f6"/><stop offset="0.55" stop-color="#cfeafc"/><stop offset="1" stop-color="#f4fbff"/></linearGradient></defs><circle cx="8" cy="8.8" r="7.4" fill="url(#zg348)" stroke="#8c9ee6" stroke-width="0.9"/><path d="M4.7 8.8h6.6M8 5.5v6.6" stroke="#2050b4" stroke-width="1.4" fill="none"/></svg></div>
<div class="abs btn" style="left:755px;top:378px;width:27px;height:27px"><svg class="abs" style="left:4px;top:4px" width="17" height="18" viewBox="0 0 16 17"><defs><linearGradient id="zg378" x1="0.1" y1="0.1" x2="0.9" y2="0.9"><stop offset="0" stop-color="#a4d0f6"/><stop offset="0.55" stop-color="#cfeafc"/><stop offset="1" stop-color="#f4fbff"/></linearGradient></defs><circle cx="8" cy="8.8" r="7.4" fill="url(#zg378)" stroke="#8c9ee6" stroke-width="0.9"/><path d="M4.7 8.8h6.6" stroke="#2050b4" stroke-width="1.4" fill="none"/></svg></div>
<div class="abs btn" style="left:11px;top:420px;width:38px;height:38px"><div class="abs" style="left:3px;top:3px;width:30px;height:30px;box-sizing:border-box;border:1px solid #ff0000"></div><div class="abs" style="left:8px;top:8px;width:20px;height:20px;border-radius:50%;background:#ff0000"></div></div>
<div class="abs btn" style="left:51px;top:420px;width:38px;height:38px"><svg class="abs" style="left:-1px;top:-1px" width="38" height="37" viewBox="0 0 38 37" shape-rendering="crispEdges"><path d="M7 6h24l3 3v23h-27z" fill="#000"/><path d="M6 5h24l3 3v23h-27z" fill="#16a8a8"/><rect x="6" y="5" width="3" height="26" fill="#0f9494"/><rect x="6" y="14" width="27" height="2" fill="#28b8b8"/><rect x="13" y="5" width="13" height="8" fill="#c6c6c6"/><rect x="21" y="6" width="3" height="6" fill="#1fa0a0"/><rect x="10" y="19" width="18" height="11" fill="#f4f4f4"/><path d="M11 20.5h16M11 22.5h16M11 24.5h16M11 26.5h16M11 28.5h16" stroke="#505050" stroke-width="1"/><rect x="7" y="29" width="1" height="1" fill="#064"/><rect x="31" y="29" width="1" height="1" fill="#064"/></svg></div>
<div class="abs hdr" id="sdv" style="left:100px;top:416px;font-size:13px;line-height:16px;letter-spacing:-0.45px">Сдвиг по OY</div>
<div class="abs hdr" id="dev" style="left:100px;top:444px;font-size:14px;line-height:18px;letter-spacing:0.8px;word-spacing:2px">Device: Простой</div>
<div class="abs hdr" id="err" style="left:356px;top:443px;font-size:14px;line-height:18px;letter-spacing:0.5px">Ошибки<span id="err2" style="font-weight:normal;letter-spacing:0.4px">:-/-</span></div>
<div class="abs btn" style="left:179px;top:410px;width:27px;height:27px"><svg class="abs" style="left:2px;top:3px" width="20" height="20" viewBox="0 0 20 20"><defs><linearGradient id="ag179" x1="0" y1="0.2" x2="1" y2="0.8"><stop offset="0" stop-color="#2aa0e6"/><stop offset="0.45" stop-color="#2460d4"/><stop offset="1" stop-color="#8ea6f0"/></linearGradient><radialGradient id="ah179" cx="0.5" cy="0.6" r="0.55"><stop offset="0.7" stop-color="#102a90" stop-opacity="0"/><stop offset="1" stop-color="#102a90" stop-opacity="0.85"/></radialGradient></defs><circle cx="9.8" cy="10" r="7.9" fill="url(#ag179)"/><circle cx="9.8" cy="10" r="7.9" fill="url(#ah179)" stroke="#3a58a8" stroke-width="0.8"/><path d="M9.8 5.2v8.5M6.4 10.4l3.4 3.6 3.4-3.6" stroke="#fff" stroke-width="2.6" fill="none"/></svg></div>
<div class="abs btn" style="left:211px;top:410px;width:27px;height:27px"><svg class="abs" style="left:2px;top:3px" width="20" height="20" viewBox="0 0 20 20"><defs><linearGradient id="ag211" x1="0" y1="0.2" x2="1" y2="0.8"><stop offset="0" stop-color="#2aa0e6"/><stop offset="0.45" stop-color="#2460d4"/><stop offset="1" stop-color="#8ea6f0"/></linearGradient><radialGradient id="ah211" cx="0.5" cy="0.6" r="0.55"><stop offset="0.7" stop-color="#102a90" stop-opacity="0"/><stop offset="1" stop-color="#102a90" stop-opacity="0.85"/></radialGradient></defs><circle cx="9.8" cy="10" r="7.9" fill="url(#ag211)"/><circle cx="9.8" cy="10" r="7.9" fill="url(#ah211)" stroke="#3a58a8" stroke-width="0.8"/><path d="M9.8 15.3v-8.5M6.4 10.1l3.4-3.6 3.4 3.6" stroke="#fff" stroke-width="2.6" fill="none"/></svg></div>
<div class="abs" style="left:243px;top:428px;width:500px;height:17px;box-sizing:border-box;border:1px solid #000;background:#fff;text-align:center;font-weight:bold;font-size:13px;line-height:15px;letter-spacing:-0.8px;padding-right:3px">0%</div>
<div class="abs btn" style="left:747px;top:420px;width:38px;height:38px"><svg class="abs" style="left:-1px;top:-1px" width="38" height="37" viewBox="0 0 38 37"><defs><linearGradient id="dg" x1="0" y1="0" x2="0.6" y2="1"><stop offset="0" stop-color="#8a8ac8"/><stop offset="1" stop-color="#2a2a4a"/></linearGradient></defs><rect x="10.5" y="4.5" width="19" height="25" fill="url(#dg)" stroke="#101018" stroke-width="1"/><path d="M17.3 33.2l12-6v1.2l-12 6z" fill="#000"/><path d="M29.3 5l-12 5.2v22.8l12-6z" fill="#c89494" stroke="#8a5a5a" stroke-width="0.5"/><circle cx="20.3" cy="20.8" r="1" fill="#fff"/><path d="M4 15.2h5.6v-3.1l6.6 5.5-6.6 5.3v-2.7h-5.6z" fill="#f00000"/></svg></div>
</div>
</body>
</html>
